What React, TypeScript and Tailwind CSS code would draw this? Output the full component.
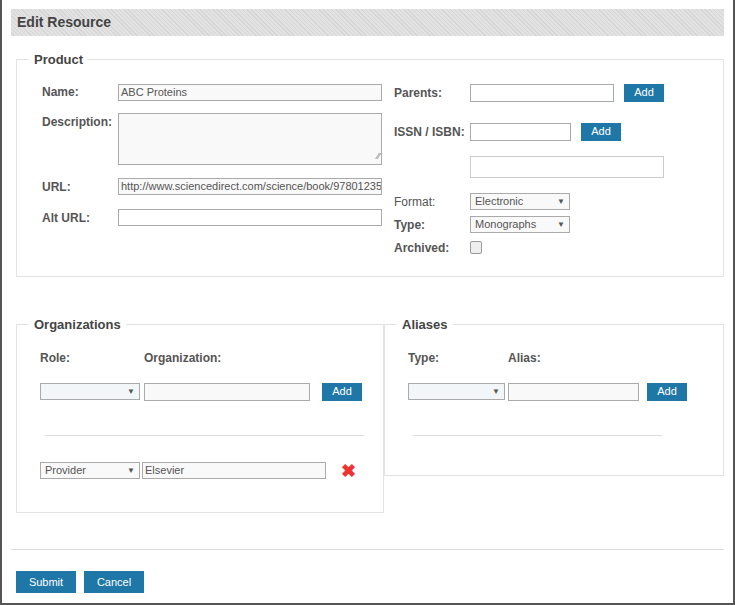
import React from "react";

const F = { fontFamily: '"Liberation Sans", Arial, sans-serif' };
const lbl = "text-[12px] font-bold text-[#555]";
const inp = "h-[17px] border border-[#aaa] bg-[#f9f9f9] text-[11px] text-[#555] px-[2px] leading-[15px] overflow-hidden whitespace-nowrap";
const btn = "h-[18px] bg-[#1f77a8] text-white text-[11px] flex items-center justify-center";

function Sel({ w, text, bg = "bg-[#f9f9f9]" }: { w: string; text?: string; bg?: string }) {
  return (
    <div className={`${w} ${bg} h-[17px] border border-[#aaa] text-[11px] text-[#555] flex items-center justify-between px-[4px]`}>
      <span>{text}</span>
      <span className="text-[8px] text-[#555]">▼</span>
    </div>
  );
}

export default function App() {
  return (
    <div style={F} className="w-[735px] h-[605px] bg-white border-l-2 border-r-2 border-b-2 border-[#555] relative">
      <div className="pt-[9px] pl-[9px] pr-[9px]">
        <div
          className="h-[27px] flex items-center pl-[6px] text-[14px] font-bold text-[#444]"
          style={{ background: "repeating-linear-gradient(45deg,#e2e2e2 0 2px,#d6d6d6 2px 3px)" }}
        >
          Edit Resource
        </div>
      </div>

      <fieldset className="ml-[14px] mr-[9px] mt-[14px] h-[227px] border border-[#e3e3e3] pl-[25px] pr-0 pt-[14px] m-0">
        <legend className="px-[5px] ml-[-13px] text-[13px] font-bold text-[#444]">Product</legend>
        <div className="flex">
          <div className="w-[341px]">
            <div className="flex items-center h-[17px]"><span className={`${lbl} w-[76px]`}>Name:</span><div className={`${inp} w-[264px]`}>ABC Proteins</div></div>
            <div className="flex mt-[12px]"><span className={`${lbl} w-[76px]`}>Description:</span><div className={`${inp} w-[264px] h-[52px] relative`}><span className="absolute right-[1px] bottom-0 text-[9px] text-[#777]">⁄⁄</span></div></div>
            <div className="flex items-center mt-[13px]"><span className={`${lbl} w-[76px]`}>URL:</span><div className={`${inp} w-[264px]`}>http://www.sciencedirect.com/science/book/97801235</div></div>
            <div className="flex items-center mt-[13px]"><span className={`${lbl} w-[76px]`}>Alt URL:</span><div className={`${inp} w-[264px] bg-white`}></div></div>
          </div>
          <div className="ml-[11px]">
            <div className="flex items-center h-[18px]"><span className={`${lbl} w-[76px]`}>Parents:</span><div className={`${inp} w-[144px] h-[18px] bg-white`}></div><div className={`${btn} w-[40px] ml-[10px]`}>Add</div></div>
            <div className="flex items-center h-[18px] mt-[21px]"><span className={`${lbl} w-[76px]`}>ISSN / ISBN:</span><div className={`${inp} w-[101px] h-[18px] bg-white`}></div><div className={`${btn} w-[40px] ml-[10px]`}>Add</div></div>
            <div className="ml-[76px] mt-[15px] w-[194px] h-[22px] border border-[#ccc]"></div>
            <div className="flex items-center mt-[15px]"><span className={`${lbl} w-[76px] font-normal`}>Format:</span><Sel w="w-[100px]" text="Electronic" /></div>
            <div className="flex items-center mt-[5px]"><span className={`${lbl} w-[76px]`}>Type:</span><Sel w="w-[100px]" text="Monographs" /></div>
            <div className="flex items-center mt-[5px]"><span className={`${lbl} w-[76px]`}>Archived:</span><div className="w-[12px] h-[13px] border border-[#999] rounded-[2px] bg-[#eee]"></div></div>
          </div>
        </div>
      </fieldset>

      <div className="flex mt-[38px] items-start">
        <fieldset className="ml-[14px] w-[368px] h-[198px] border border-[#e3e3e3] pl-[23px] pt-[14px] m-0">
          <legend className="px-[5px] ml-[-11px] text-[13px] font-bold text-[#444]">Organizations</legend>
          <div className="flex"><span className={`${lbl} w-[104px]`}>Role:</span><span className={lbl}>Organization:</span></div>
          <div className="flex items-center mt-[16px]">
            <Sel w="w-[100px]" bg="bg-[#f3f6f9]" /><div className={`${inp} w-[166px] h-[18px] ml-[4px] bg-[#f3f6f9]`}></div><div className={`${btn} w-[40px] ml-[12px]`}>Add</div>
          </div>
          <div className="ml-[5px] mt-[34px] w-[319px] border-t border-[#ddd]"></div>
          <div className="flex items-center mt-[26px]">
            <Sel w="w-[100px]" text="Provider" /><div className={`${inp} w-[184px] ml-[2px]`}>Elsevier</div>
            <span className="ml-[15px] text-[18px] font-bold text-[#e33] leading-none">✖</span>
          </div>
        </fieldset>
        <fieldset className="w-[340px] h-[161px] border border-[#e3e3e3] pl-[23px] pt-[14px] m-0">
          <legend className="px-[5px] ml-[-11px] text-[13px] font-bold text-[#444]">Aliases</legend>
          <div className="flex"><span className={`${lbl} w-[100px]`}>Type:</span><span className={lbl}>Alias:</span></div>
          <div className="flex items-center mt-[16px]">
            <Sel w="w-[97px]" bg="bg-[#f3f6f9]" /><div className={`${inp} w-[131px] h-[18px] ml-[3px] bg-[#f3f6f9]`}></div><div className={`${btn} w-[40px] ml-[8px]`}>Add</div>
          </div>
          <div className="ml-[5px] mt-[34px] w-[249px] border-t border-[#ddd]"></div>
        </fieldset>
      </div>

      <div className="absolute left-[9px] right-[9px] top-[549px] border-t border-[#ddd]"></div>
      <div className="absolute left-[14px] top-[571px] flex gap-[8px]">
        <div className={`${btn} w-[60px] h-[22px]`}>Submit</div>
        <div className={`${btn} w-[60px] h-[22px]`}>Cancel</div>
      </div>
    </div>
  );
}
